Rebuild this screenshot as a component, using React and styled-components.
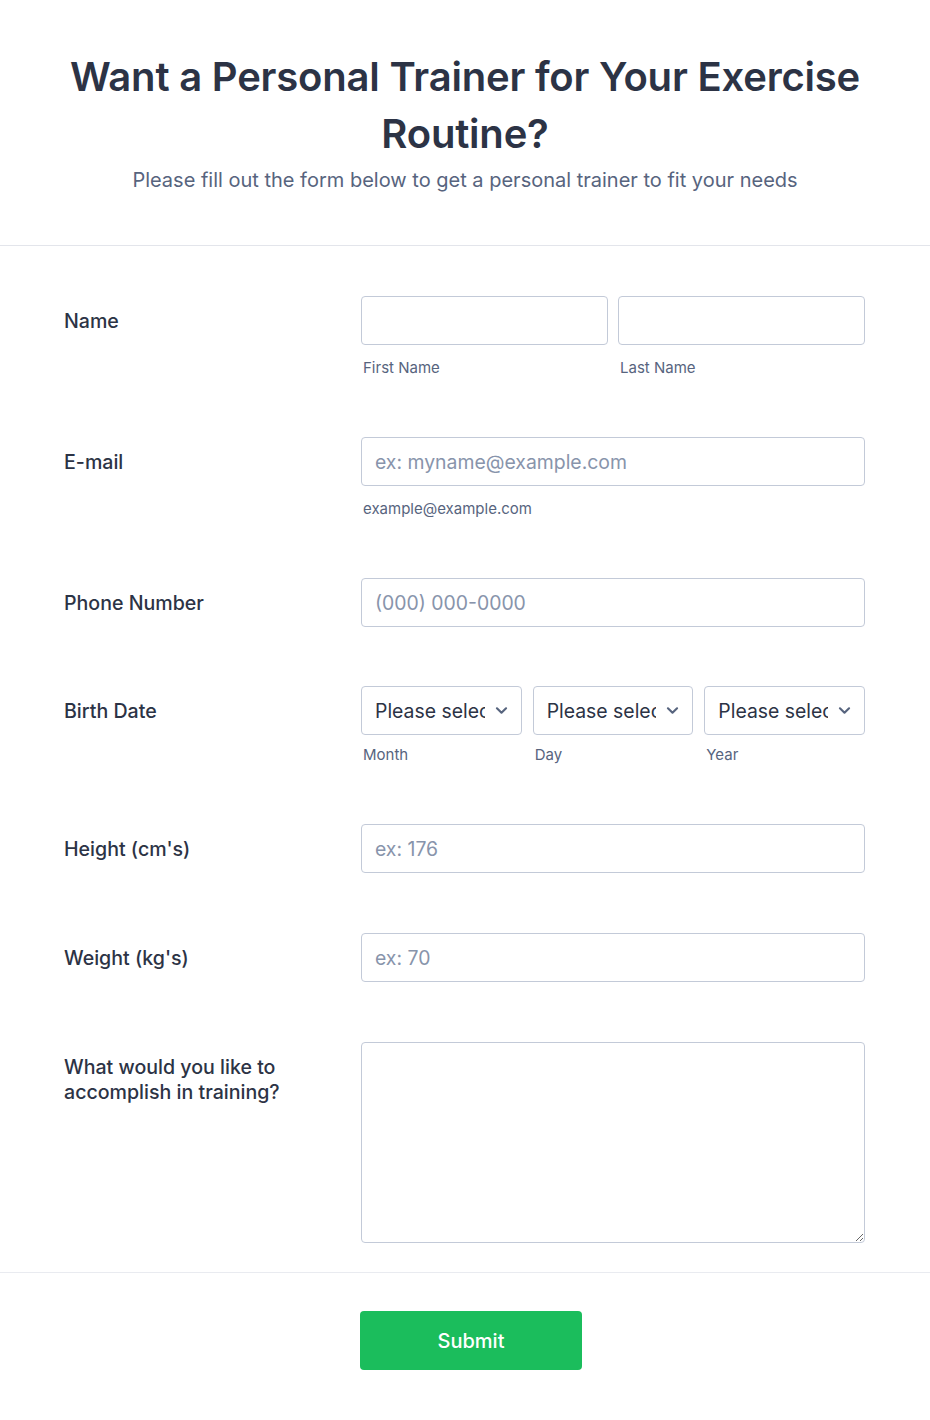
import React from "react";
import styled, { createGlobalStyle } from "styled-components";

const GlobalStyle = createGlobalStyle`
  body {
    margin: 0;
    background: #ffffff;
    font-family: Inter, "Noto Sans", sans-serif;
    color: #2c3345;
  }
  * { box-sizing: border-box; }
`;

const Page = styled.div`
  width: 930px;
  background: #fff;
`;

const Header = styled.header`
  padding: 48px 40px 52px;
  text-align: center;
  border-bottom: 1px solid #e3e5eb;
`;

const Title = styled.h1`
  margin: 0;
  font-size: 40px;
  line-height: 57px;
  font-weight: 600;
  color: #2c3345;
  letter-spacing: -0.2px;
`;

const Subtitle = styled.p`
  margin: 6px 0 0;
  font-size: 20px;
  line-height: 25px;
  color: #57647e;
`;

const Form = styled.form`
  padding: 50px 0 0;
`;

const Row = styled.div`
  display: grid;
  grid-template-columns: 297px 504px;
  padding: 0 0 0 64px;
  margin-bottom: ${(p) => p.$space || "60px"};
`;

const Label = styled.label`
  padding-top: 13px;
  font-size: 19.6px;
  line-height: 25px;
  font-weight: 500;
  color: #2c3345;
  padding-right: 16px;
`;

const Fields = styled.div`
  display: grid;
  grid-template-columns: ${(p) => `repeat(${p.$cols || 1}, 1fr)`};
  column-gap: ${(p) => (p.$gap ? p.$gap : "10px")};
`;

const Field = styled.div`
  display: flex;
  flex-direction: column;
`;

const TextInput = styled.input`
  width: 100%;
  height: 49px;
  border: 1px solid #c3cad8;
  border-radius: 4px;
  padding: 0 13px;
  font-family: Inter, "Noto Sans", sans-serif;
  font-size: 19.4px;
  color: #2c3345;
  outline: none;
  &::placeholder {
    color: #8894ab;
  }
`;

const SubLabel = styled.span`
  margin-top: ${(p) => p.$top || "14px"};
  padding-left: 2px;
  font-size: 15px;
  line-height: 18px;
  color: #57647e;
`;

const SelectWrap = styled.div`
  position: relative;
`;

const Select = styled.select`
  width: 100%;
  height: 49px;
  appearance: none;
  border: 1px solid #c3cad8;
  border-radius: 4px;
  padding: 0 36px 0 13px;
  background: #fff;
  font-family: Inter, "Noto Sans", sans-serif;
  font-size: 19.4px;
  color: #2c3345;
  outline: none;
`;

const Chevron = styled.svg`
  position: absolute;
  right: 14px;
  top: 18px;
  pointer-events: none;
`;

const TextArea = styled.textarea`
  width: 100%;
  height: 201px;
  border: 1px solid #c3cad8;
  border-radius: 4px;
  padding: 10px 13px;
  font-family: Inter, "Noto Sans", sans-serif;
  font-size: 19.4px;
  outline: none;
  display: block;
`;

const Footer = styled.div`
  margin-top: -31px;
  border-top: 1px solid #e9ebf0;
  padding: 38px 0 50px 360px;
`;

const SubmitButton = styled.button`
  width: 222px;
  height: 59px;
  border: none;
  border-radius: 4px;
  background: #1bbd5c;
  color: #fff;
  font-family: Inter, "Noto Sans", sans-serif;
  font-size: 20px;
  font-weight: 500;
  cursor: pointer;
`;

const DateSelect = ({ label }) => (
  <Field>
    <SelectWrap>
      <Select defaultValue="">
        <option value="">Please select</option>
      </Select>
      <Chevron width="13" height="13" viewBox="0 0 12 12">
        <path
          d="M1.8 4 L6 8 L10.2 4"
          fill="none"
          stroke="#57647e"
          strokeWidth="2"
          strokeLinecap="round"
          strokeLinejoin="round"
        />
      </Chevron>
    </SelectWrap>
    <SubLabel $top="11px">{label}</SubLabel>
  </Field>
);

const App = () => {
  return (
    <Page>
      <GlobalStyle />
      <Header>
        <Title>Want a Personal Trainer for Your Exercise Routine?</Title>
        <Subtitle>
          Please fill out the form below to get a personal trainer to fit your
          needs
        </Subtitle>
      </Header>
      <Form onSubmit={(e) => e.preventDefault()}>
        <Row>
          <Label>Name</Label>
          <Fields $cols={2}>
            <Field>
              <TextInput type="text" />
              <SubLabel>First Name</SubLabel>
            </Field>
            <Field>
              <TextInput type="text" />
              <SubLabel>Last Name</SubLabel>
            </Field>
          </Fields>
        </Row>
        <Row>
          <Label>E-mail</Label>
          <Fields>
            <Field>
              <TextInput type="email" placeholder="ex: myname@example.com" />
              <SubLabel>example@example.com</SubLabel>
            </Field>
          </Fields>
        </Row>
        <Row $space="59px">
          <Label>Phone Number</Label>
          <Fields>
            <TextInput type="tel" placeholder="(000) 000-0000" />
          </Fields>
        </Row>
        <Row $space="60px">
          <Label>Birth Date</Label>
          <Fields $cols={3} $gap="11px">
            <DateSelect label="Month" />
            <DateSelect label="Day" />
            <DateSelect label="Year" />
          </Fields>
        </Row>
        <Row>
          <Label>Height (cm's)</Label>
          <Fields>
            <TextInput type="text" placeholder="ex: 176" />
          </Fields>
        </Row>
        <Row>
          <Label>Weight (kg's)</Label>
          <Fields>
            <TextInput type="text" placeholder="ex: 70" />
          </Fields>
        </Row>
        <Row>
          <Label>What would you like to accomplish in training?</Label>
          <Fields>
            <TextArea />
          </Fields>
        </Row>
        <Footer>
          <SubmitButton type="submit">Submit</SubmitButton>
        </Footer>
      </Form>
    </Page>
  );
};

export default App;
